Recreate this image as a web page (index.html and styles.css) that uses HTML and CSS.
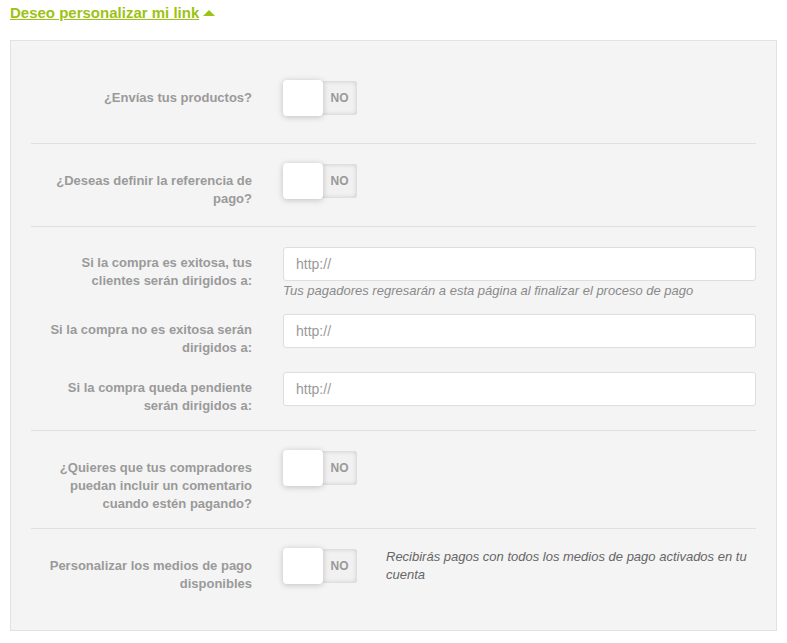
FILE: index.html
```html
<!DOCTYPE html>
<html lang="es">
<head>
<meta charset="utf-8">
<link rel="stylesheet" href="styles.css">
</head>
<body>
<a class="toggle-link" href="#">Deseo personalizar mi link</a><span class="caret"></span>
<div class="panel">
  <div class="section">
    <div class="group">
      <label class="lbl">¿Envías tus productos?</label>
      <div class="ctrl"><span class="switch"><span class="knob"></span><span class="no">NO</span></span></div>
    </div>
  </div>
  <div class="section">
    <div class="group">
      <label class="lbl">¿Deseas definir la referencia de pago?</label>
      <div class="ctrl"><span class="switch"><span class="knob"></span><span class="no">NO</span></span></div>
    </div>
  </div>
  <div class="section urls">
    <div class="group">
      <label class="lbl lbl-input">Si la compra es exitosa, tus clientes serán dirigidos a:</label>
      <div class="ctrl">
        <input class="field" type="text" placeholder="http://">
        <p class="hint">Tus pagadores regresarán a esta página al finalizar el proceso de pago</p>
      </div>
    </div>
    <div class="group">
      <label class="lbl lbl-input">Si la compra no es exitosa serán dirigidos a:</label>
      <div class="ctrl"><input class="field" type="text" placeholder="http://"></div>
    </div>
    <div class="group">
      <label class="lbl lbl-input">Si la compra queda pendiente serán dirigidos a:</label>
      <div class="ctrl"><input class="field" type="text" placeholder="http://"></div>
    </div>
  </div>
  <div class="section">
    <div class="group">
      <label class="lbl">¿Quieres que tus compradores puedan incluir un comentario cuando estén pagando?</label>
      <div class="ctrl"><span class="switch"><span class="knob"></span><span class="no">NO</span></span></div>
    </div>
  </div>
  <div class="section last">
    <div class="group">
      <label class="lbl">Personalizar los medios de pago disponibles</label>
      <div class="ctrl ctrl-row">
        <span class="switch"><span class="knob"></span><span class="no">NO</span></span>
        <p class="desc">Recibirás pagos con todos los medios de pago activados en tu cuenta</p>
      </div>
    </div>
  </div>
</div>
</body>
</html>
```

FILE: styles.css
```css
* { box-sizing: border-box; }
html, body { margin: 0; padding: 0; background: #fff; }
body {
  font-family: "Liberation Sans", Arial, Helvetica, sans-serif;
  padding: 3px 10px 0 10px;
  width: 787px;
}
.toggle-link {
  color: #9cc213;
  font-weight: bold;
  font-size: 15px;
  line-height: 19px;
  text-decoration: underline;
}
.caret {
  display: inline-block;
  width: 0; height: 0;
  margin-left: 4px;
  border-left: 6px solid transparent;
  border-right: 6px solid transparent;
  border-bottom: 6px solid #9cc213;
  vertical-align: 2px;
}
.panel {
  margin-top: 18px;
  width: 767px;
  background: #f4f4f4;
  border: 1px solid #e2e2e2;
  padding: 20px 20px 19px 20px;
}
.section {
  padding-top: 19px;
  border-bottom: 1px solid #e0e0e0;
}
.section.last { border-bottom: none; }
.section.urls { padding-top: 20px; }
.group {
  display: grid;
  grid-template-columns: 221px 1fr;
  column-gap: 31px;
  margin-bottom: 15px;
}
.lbl {
  text-align: right;
  font-weight: bold;
  font-size: 13px;
  line-height: 18px;
  color: #9a9a9a;
  padding-top: 9px;
}
.lbl.lbl-input { padding-top: 7px; }
.ctrl { min-height: 48px; }
.urls .ctrl { min-height: 0; }
.ctrl-row { display: flex; align-items: flex-start; }
.switch {
  position: relative;
  display: inline-block;
  width: 74px;
  height: 34px;
  margin-top: 1px;
  background: #f1f1f1;
  border-radius: 3px;
  box-shadow: inset 0 0 5px rgba(0,0,0,0.18);
}
.knob {
  position: absolute;
  left: 0; top: -1px;
  width: 40px;
  height: 36px;
  background: #fff;
  border-radius: 4px;
  box-shadow: 0 1px 6px rgba(0,0,0,0.22);
}
.no {
  position: absolute;
  left: 39px; right: 0; top: 0; bottom: 0;
  display: flex;
  align-items: center;
  justify-content: center;
  font-size: 12px;
  font-weight: bold;
  color: #999;
}
.field {
  display: block;
  width: 100%;
  height: 34px;
  border: 1px solid #dedede;
  border-radius: 3px;
  background: #fff;
  padding: 0 12px;
  font-family: "Liberation Sans", Arial, sans-serif;
  font-size: 14px;
  color: #555;
  outline: none;
}
.field::placeholder { color: #999; }
.hint {
  margin: 2px 0 0 0;
  font-size: 13px;
  line-height: 16px;
  font-style: italic;
  color: #8a8a8a;
}
.desc {
  margin: 0 0 0 29px;
  width: 372px;
  font-size: 13px;
  line-height: 18px;
  font-style: italic;
  color: #666;
}
```
